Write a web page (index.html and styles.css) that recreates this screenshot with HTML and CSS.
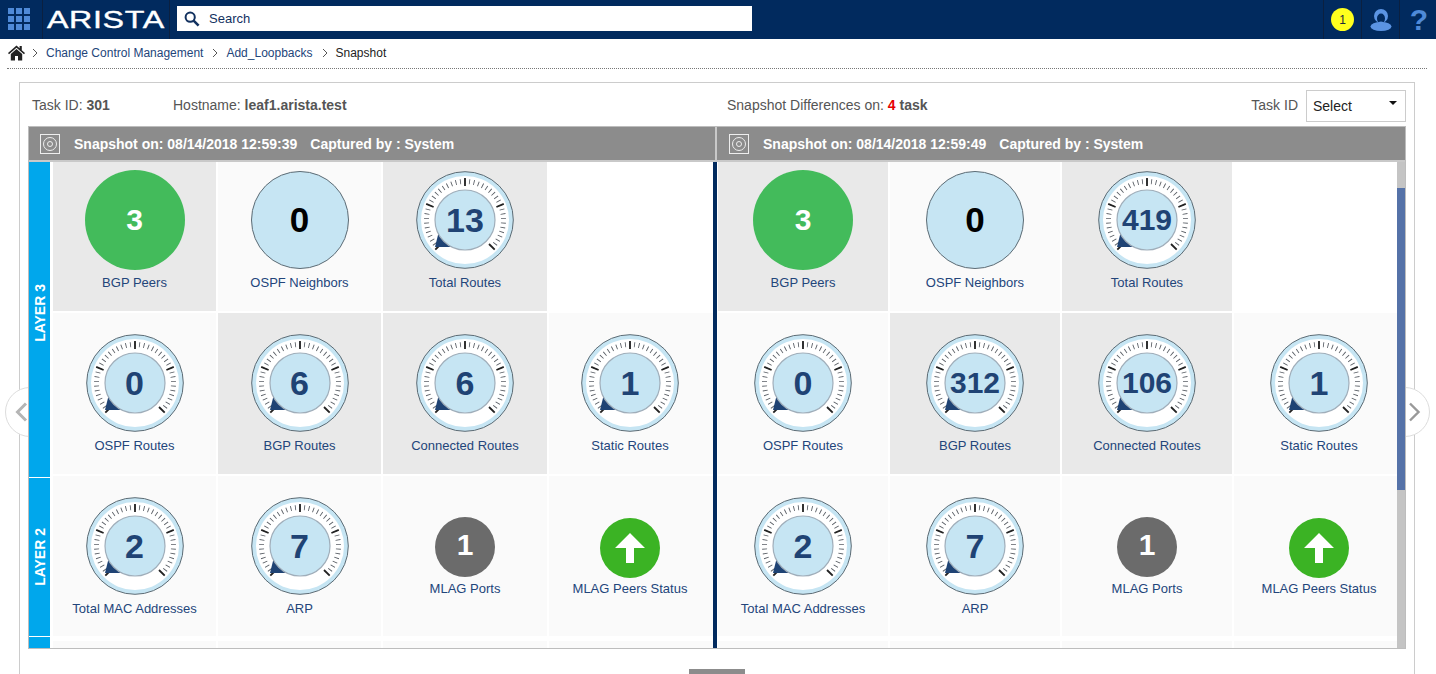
FILE: index.html
```html
<!DOCTYPE html>
<html lang="en">
<head>
<meta charset="utf-8">
<title>Snapshot</title>
<link rel="stylesheet" href="styles.css">
</head>
<body>
<svg class="defs" width="0" height="0">
  <symbol id="dial" viewBox="-49 -49 98 98">
    <circle r="48.3" fill="#c6e5f3" stroke="#5c6b74" stroke-width="1"/>
    <circle r="44" fill="#fff"/>
    <circle r="38.5" fill="none" stroke="#5a5f66" stroke-width="5" pathLength="360" stroke-dasharray="1.3 5.45" stroke-dashoffset="0.65" transform="rotate(135)"/>
    <circle r="38.5" fill="none" stroke="#fff" stroke-width="7" pathLength="360" stroke-dasharray="88 272" transform="rotate(46)"/>
    <g stroke="#222" stroke-width="1.8">
      <line x1="0" y1="-34" x2="0" y2="-42"/>
      <line x1="31.4" y1="-13" x2="38.8" y2="-16.1"/>
      <line x1="-31.4" y1="-13" x2="-38.8" y2="-16.1"/>
      <line x1="24" y1="24" x2="29.7" y2="29.7"/>
      <line x1="-24" y1="24" x2="-29.7" y2="29.7"/>
    </g>
    <path d="M-30 27 L-26 11 L-11 27 Z" fill="#1f4374"/>
    <circle r="30" fill="#c6e5f3" stroke="#a0aeba" stroke-width="1.2"/>
  </symbol>
</svg>

<header class="topbar">
  <div class="tb-apps">
    <svg width="22" height="22" viewBox="0 0 22 22" fill="#4f8ad8"><rect x="0" y="0" width="6" height="6"/><rect x="8" y="0" width="6" height="6"/><rect x="16" y="0" width="6" height="6"/><rect x="0" y="8" width="6" height="6"/><rect x="8" y="8" width="6" height="6"/><rect x="16" y="8" width="6" height="6"/><rect x="0" y="16" width="6" height="6"/><rect x="8" y="16" width="6" height="6"/><rect x="16" y="16" width="6" height="6"/></svg>
  </div>
  <div class="tb-logo"><span class="logo-text">ARISTA</span></div>
  <div class="tb-search">
    <svg width="16" height="16" viewBox="0 0 16 16" fill="none" stroke="#12315f" stroke-width="2"><circle cx="6.2" cy="6.2" r="4.6"/><line x1="9.6" y1="9.6" x2="14.6" y2="14.6" stroke-width="2.6"/></svg>
    <span>Search</span>
  </div>
  <div class="tb-spacer"></div>
  <div class="tb-item"><span class="badge">1</span></div>
  <div class="tb-item">
    <svg width="26" height="24" viewBox="0 0 26 24"><ellipse cx="13" cy="18.5" rx="10.5" ry="4.5" fill="#5b94e3"/><circle cx="13" cy="8" r="7" fill="#5b94e3"/><ellipse cx="13" cy="10.5" rx="4" ry="5" fill="#012a5e"/><ellipse cx="13" cy="15" rx="3" ry="1.6" fill="#5b94e3"/></svg>
  </div>
  <div class="tb-item tb-help">?</div>
</header>

<nav class="crumbs">
  <svg class="home" width="17" height="16" viewBox="0 0 17 16" fill="#222"><path d="M8.5 0.5 L0 8 L1 9.2 L8.5 2.8 L16 9.2 L17 8 L13.8 5.2 V1 H11.6 V3.2 Z"/><path d="M8.5 4 L2.8 9 V15.5 H7 V11 H10 V15.5 H14.2 V9 Z"/></svg>
  <svg class="chev" width="6" height="10" viewBox="0 0 6 10"><path d="M1 1 L5 5 L1 9" fill="none" stroke="#555"/></svg>
  <a class="crumb-link">Change Control Management</a>
  <svg class="chev" width="6" height="10" viewBox="0 0 6 10"><path d="M1 1 L5 5 L1 9" fill="none" stroke="#555"/></svg>
  <a class="crumb-link">Add_Loopbacks</a>
  <svg class="chev" width="6" height="10" viewBox="0 0 6 10"><path d="M1 1 L5 5 L1 9" fill="none" stroke="#555"/></svg>
  <span class="crumb-current">Snapshot</span>
</nav>

<main class="panel">
  <div class="side-arrow side-arrow-left"><svg width="13" height="20" viewBox="0 0 13 20"><path d="M11 1.5 L2.5 10 L11 18.5" fill="none" stroke="#b5b5b5" stroke-width="3"/></svg></div>
  <div class="side-arrow side-arrow-right"><svg width="13" height="20" viewBox="0 0 13 20"><path d="M2 1.5 L10.5 10 L2 18.5" fill="none" stroke="#999" stroke-width="2.4"/></svg></div>

  <div class="info">
    <div class="info-task">Task ID: <b>301</b></div>
    <div class="info-host">Hostname: <b>leaf1.arista.test</b></div>
    <div class="info-diff">Snapshot Differences on: <b class="red">4</b> <b>task</b></div>
    <div class="info-label">Task ID</div>
    <div class="select">Select<span class="caret"></span></div>
  </div>

  <section class="compare">
    <div class="cmp-head">
      <div class="cmp-title">
        <svg class="snap-icon" width="20" height="20" viewBox="0 0 20 20" fill="none" stroke="#eee"><rect x="0.5" y="0.5" width="19" height="19"/><circle cx="10" cy="10" r="6.5"/><circle cx="10" cy="10" r="2.5"/></svg>
        <span>Snapshot on: 08/14/2018 12:59:39</span><span>Captured by : System</span>
      </div>
      <div class="cmp-title cmp-title-right">
        <svg class="snap-icon" width="20" height="20" viewBox="0 0 20 20" fill="none" stroke="#eee"><rect x="0.5" y="0.5" width="19" height="19"/><circle cx="10" cy="10" r="6.5"/><circle cx="10" cy="10" r="2.5"/></svg>
        <span>Snapshot on: 08/14/2018 12:59:49</span><span>Captured by : System</span>
      </div>
    </div>

    <div class="cmp-body">
      <div class="layers">
        <div class="layer layer3"><span>LAYER 3</span></div>
        <div class="layer layer2"><span>LAYER 2</span></div>
        <div class="layer layer-more"></div>
      </div>

      <div class="grid grid-left">
        <div class="cell dark top"><div class="peers">3</div><div class="label">BGP Peers</div></div>
        <div class="cell top"><div class="neighbors">0</div><div class="label">OSPF Neighbors</div></div>
        <div class="cell dark top"><div class="gauge"><svg><use href="#dial"/></svg><span class="gv">13</span></div><div class="label">Total Routes</div></div>
        <div class="cell blank"></div>

        <div class="cell"><div class="gauge"><svg><use href="#dial"/></svg><span class="gv">0</span></div><div class="label">OSPF Routes</div></div>
        <div class="cell dark"><div class="gauge"><svg><use href="#dial"/></svg><span class="gv">6</span></div><div class="label">BGP Routes</div></div>
        <div class="cell dark"><div class="gauge"><svg><use href="#dial"/></svg><span class="gv">6</span></div><div class="label">Connected Routes</div></div>
        <div class="cell"><div class="gauge"><svg><use href="#dial"/></svg><span class="gv">1</span></div><div class="label">Static Routes</div></div>

        <div class="cell"><div class="gauge"><svg><use href="#dial"/></svg><span class="gv">2</span></div><div class="label">Total MAC Addresses</div></div>
        <div class="cell"><div class="gauge"><svg><use href="#dial"/></svg><span class="gv">7</span></div><div class="label">ARP</div></div>
        <div class="cell"><div class="ports">1</div><div class="label label-mlag">MLAG Ports</div></div>
        <div class="cell"><div class="status"><svg width="30" height="30" viewBox="0 0 30 30" fill="#fff"><path d="M15 0 L30 15 H19 V30 H11 V15 H0 Z"/></svg></div><div class="label label-mlag">MLAG Peers Status</div></div>

        <div class="cell more"></div><div class="cell more"></div><div class="cell more"></div><div class="cell more"></div>
      </div>

      <div class="splitter"></div>

      <div class="grid grid-right">
        <div class="cell dark top"><div class="peers">3</div><div class="label">BGP Peers</div></div>
        <div class="cell top"><div class="neighbors">0</div><div class="label">OSPF Neighbors</div></div>
        <div class="cell dark top"><div class="gauge"><svg><use href="#dial"/></svg><span class="gv gv-long">419</span></div><div class="label">Total Routes</div></div>
        <div class="cell blank"></div>

        <div class="cell"><div class="gauge"><svg><use href="#dial"/></svg><span class="gv">0</span></div><div class="label">OSPF Routes</div></div>
        <div class="cell dark"><div class="gauge"><svg><use href="#dial"/></svg><span class="gv gv-long">312</span></div><div class="label">BGP Routes</div></div>
        <div class="cell dark"><div class="gauge"><svg><use href="#dial"/></svg><span class="gv gv-long">106</span></div><div class="label">Connected Routes</div></div>
        <div class="cell"><div class="gauge"><svg><use href="#dial"/></svg><span class="gv">1</span></div><div class="label">Static Routes</div></div>

        <div class="cell"><div class="gauge"><svg><use href="#dial"/></svg><span class="gv">2</span></div><div class="label">Total MAC Addresses</div></div>
        <div class="cell"><div class="gauge"><svg><use href="#dial"/></svg><span class="gv">7</span></div><div class="label">ARP</div></div>
        <div class="cell"><div class="ports">1</div><div class="label label-mlag">MLAG Ports</div></div>
        <div class="cell"><div class="status"><svg width="30" height="30" viewBox="0 0 30 30" fill="#fff"><path d="M15 0 L30 15 H19 V30 H11 V15 H0 Z"/></svg></div><div class="label label-mlag">MLAG Peers Status</div></div>

        <div class="cell more"></div><div class="cell more"></div><div class="cell more"></div><div class="cell more"></div>
      </div>

      <div class="scrollbar"><div class="thumb"></div></div>
    </div>
  </section>

  <div class="handle"></div>
</main>
</body>
</html>
```
FILE: styles.css
```css
* { box-sizing: border-box; }
html, body { margin: 0; height: 674px; overflow: hidden; background: #fff; }
body { font-family: "Liberation Sans", Arial, sans-serif; color: #555; }
.defs { display: block; height: 0; width: 0; overflow: hidden; }

/* top bar */
.topbar { display: flex; height: 39px; background: #012a5e; }
.tb-apps { width: 43px; padding: 8px 0 0 8px; border-right: 1px solid #0b2040; }
.tb-apps svg { display: block; }
.tb-logo { width: 127px; padding-left: 4px; border-right: 1px solid #0b2040; overflow: hidden; }
.logo-text { display: block; font-size: 24px; line-height: 39px; letter-spacing: 0.5px; color: #fff; -webkit-text-stroke: 0.4px #fff; transform: scaleX(1.34); transform-origin: left center; }
.tb-search { display: flex; align-items: center; gap: 9px; width: 575px; height: 25px; margin: 6px 0 0 7px; padding-left: 7px; background: #fff; color: #12315f; font-size: 13px; }
.tb-spacer { flex: 1; }
.tb-item { display: flex; align-items: center; justify-content: center; width: 38px; border-left: 1px solid #0b2040; }
.tb-help { width: 37px; padding-left: 2px; color: #4f8ad8; font-size: 30px; font-weight: 700; }
.badge { display: flex; align-items: center; justify-content: center; width: 23px; height: 23px; border-radius: 50%; background: #ffff1e; color: #1a2a3a; font-size: 12px; }

/* breadcrumb */
.crumbs { display: flex; align-items: center; height: 30px; margin: 0 9px 0 7px; padding: 1px 0 3px 1px; border-bottom: 1px dotted #777; font-size: 12px; }
.home { margin-right: 7px; }
.chev { flex: none; }
.chev + a, .chev + span { margin-left: 8px; }
a + .chev { margin-left: 9px; }
.crumb-link { color: #23457a; }
.crumb-current { color: #222; }

/* panel */
.panel { position: relative; width: 1396px; height: 640px; margin: 13px 0 0 19px; border: 1px solid #ccc; }
.info { display: flex; height: 43px; padding-left: 12px; margin-right: 8px; font-size: 14px; line-height: 44px; }
.info b { font-weight: 700; }
.info-task { width: 141px; }
.info-host { width: 554px; }
.info-diff { flex: 1; }
.info-label { margin-right: 8px; }
.red { color: #e60000; }
.select { position: relative; width: 100px; height: 32px; margin-top: 7px; padding-left: 6px; border: 1px solid #ccc; color: #222; line-height: 31px; }
.caret { position: absolute; top: 10px; right: 8px; border: 4px solid transparent; border-top: 4px solid #111; border-bottom: 0; }

/* comparison */
.compare { position: relative; z-index: 1; margin-left: 8px; width: 1378px; border: 1px solid #bdbdbd; background: #fff; }
.cmp-head { display: flex; height: 35px; background: #c9c9c9; }
.cmp-title { display: flex; align-items: center; width: 687px; height: 33px; padding-left: 11px; background: #8c8c8c; color: #fff; font-size: 14px; font-weight: 700; }
.cmp-title-right { width: 689px; margin-left: 2px; padding-left: 12px; }
.snap-icon { flex: none; margin-right: 14px; }
.cmp-title span + span { margin-left: 13px; }
.cmp-body { position: relative; display: flex; height: 486px; overflow: hidden; }

.layers { display: flex; flex-direction: column; gap: 1px; width: 21px; flex: none; margin-right: 3px; }
.layer { display: flex; align-items: center; justify-content: center; background: #00a7ec; color: #fff; font-size: 14px; font-weight: 700; }
.layer span { writing-mode: vertical-rl; transform: rotate(180deg); }
.layer3 { height: 315px; padding-bottom: 14px; }
.layer2 { height: 158px; }
.layer-more { flex: 1; }

.grid { display: grid; column-gap: 2px; grid-template-rows: 149px 161px 160px 20px; row-gap: 2px; flex: none; }
.grid-left { grid-template-columns: 163px 163px 164px 164px; width: 660px; }
.grid-left .cell:nth-child(4n) { padding-right: 2px; }
.grid-right { grid-template-columns: repeat(4, 170px); width: 686px; margin-left: 1px; }
.splitter { flex: none; width: 4px; background: #012a5e; }

.cell { display: flex; flex-direction: column; align-items: center; justify-content: center; background: #fafafa; }
.dark { background: #e9e9e9; }
.blank { background: #fff; }
.top { justify-content: flex-start; padding-top: 9px; }
.more { margin-top: 3px; }

.label { margin-top: 5px; color: #23457a; font-size: 13px; line-height: 15px; white-space: nowrap; }
.gauge + .label { margin-top: 6px; }
.label-mlag { margin-top: 4px; }

.gauge { display: grid; width: 98px; height: 98px; flex: none; }
.gauge svg { grid-area: 1 / 1; width: 98px; height: 98px; }
.gv { grid-area: 1 / 1; place-self: center; color: #1f4374; font-size: 34px; font-weight: 700; line-height: 1; }
.gv-long { font-size: 30px; }

.peers { display: flex; align-items: center; justify-content: center; width: 100px; height: 100px; margin-top: -1px; border-radius: 50%; background: #43bb5b; color: #fff; font-size: 30px; font-weight: 700; }
.neighbors { display: flex; align-items: center; justify-content: center; width: 98px; height: 98px; margin-bottom: 1px; border: 1px solid #5c6b74; border-radius: 50%; background: #c6e5f3; color: #000; font-size: 35px; font-weight: 700; }
.ports { display: flex; align-items: center; justify-content: center; width: 60px; height: 60px; padding-bottom: 3px; border-radius: 50%; background: #6b6b6b; color: #fff; font-size: 30px; font-weight: 700; }
.status { display: flex; align-items: center; justify-content: center; width: 60px; height: 60px; margin-top: 1px; margin-bottom: -1px; border-radius: 50%; background: #3bb324; }

/* overlays */
.scrollbar { position: absolute; top: 0; right: 0; bottom: 0; width: 8px; padding-top: 26px; background: #c4c4c4; }
.thumb { height: 302px; background: #5572a8; }
.side-arrow { position: absolute; top: 304px; display: flex; align-items: center; width: 50px; height: 50px; border: 1px solid #ddd; border-radius: 50%; background: #fff; }
.side-arrow-left { left: -15px; padding-left: 9px; }
.side-arrow-right { right: -16px; padding-left: 27px; }
.handle { width: 56px; height: 8px; margin: 20px auto 0; background: #8c8c8c; }
```
